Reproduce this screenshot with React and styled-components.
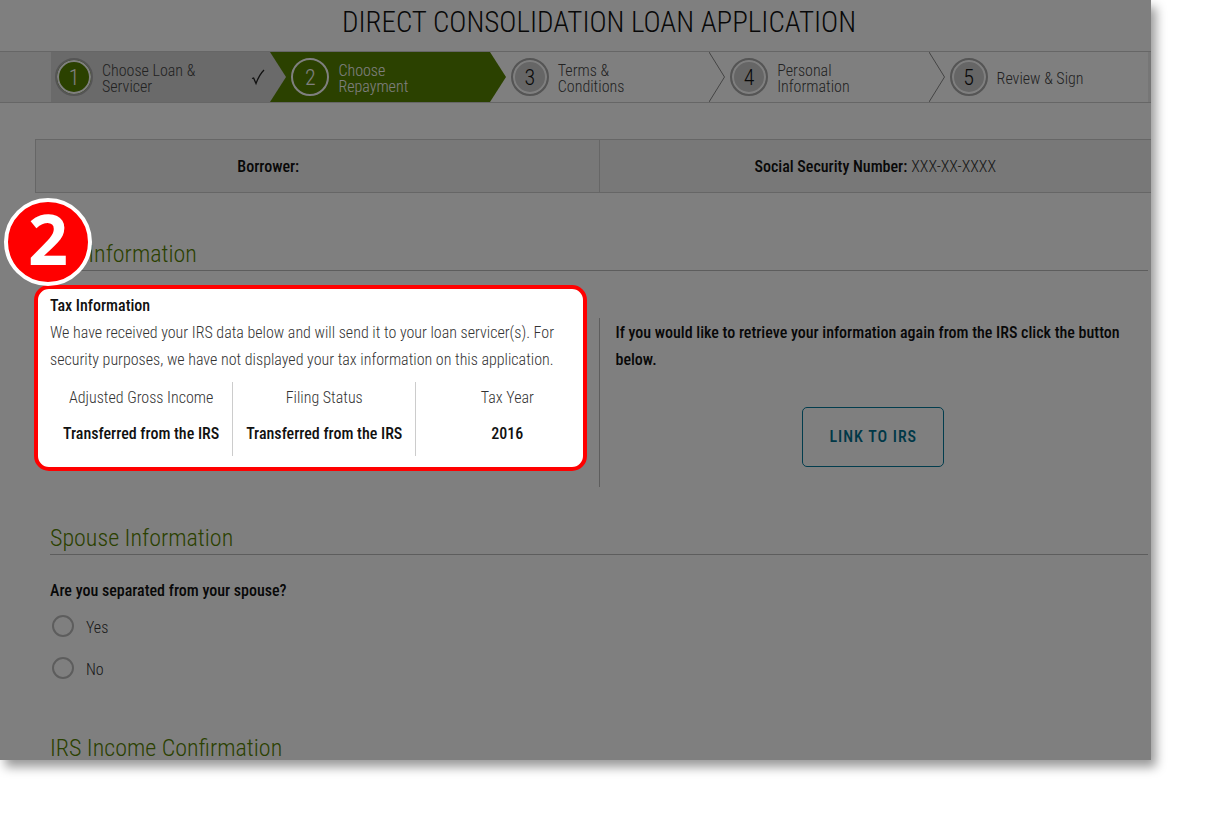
import React from 'react';
import styled, { createGlobalStyle } from 'styled-components';

const GlobalStyle = createGlobalStyle`
  *, *::before, *::after { box-sizing: border-box; }
  body {
    margin: 0;
    background: #fff;
    color: #333;
    font-family: "Roboto Condensed", "Liberation Sans Narrow", "Arial Narrow", "Liberation Sans", sans-serif;
    font-size: 16px;
    font-weight: 350;
    line-height: 27px;
  }
  h1, h2, h3, p { margin: 0; font-weight: inherit; }
`;

const Stage = styled.div`
  padding: 0 56px 58px 0;
`;

const Sheet = styled.main`
  position: relative;
  isolation: isolate;
  overflow: hidden;
  background: #fff;
  box-shadow: 5px 7px 10px rgba(0, 0, 0, 0.4);
`;

const Title = styled.h1`
  padding: 2px 0 9px 47px;
  color: #111;
  font-size: 29px;
  font-weight: 300;
  line-height: 40px;
  text-align: center;
`;

const StepBar = styled.nav`
  padding: 0 3px 0 51px;
  border: 1px solid #ccc;
  border-width: 1px 0;
  background: #ededed;
`;

const Steps = styled.ol`
  display: grid;
  grid-template-columns: repeat(5, 1fr);
  height: 50px;
  margin: 0;
  padding: 0;
  list-style: none;
  background: #fff;
`;

const fills = { done: '#d4d4d4', current: '#568200', todo: '#fff' };

const StepItem = styled.li`
  position: relative;
  display: flex;
  align-items: center;
  gap: 9px;
  padding: 0 5px 0 21px;
  background: ${({ $state }) => fills[$state]};
  color: ${({ $state }) => ($state === 'current' ? '#fff' : '#444')};
  line-height: 16px;
  &:first-child { padding-left: 4px; }
`;

const Arrow = styled.svg`
  position: absolute;
  z-index: 1;
  top: 0;
  left: 100%;
  width: 16px;
  height: 50px;
`;

const StepNumber = styled.span`
  flex: none;
  width: 38px;
  height: 38px;
  border: 2px solid ${({ $state }) => ($state === 'current' ? '#fff' : '#aaa')};
  border-radius: 50%;
  background: ${({ $state }) => ({ done: '#568200', current: 'transparent', todo: '#ccc' })[$state]};
  box-shadow: inset 0 0 0 2px ${({ $state }) => ($state === 'current' ? 'transparent' : '#fff')};
  color: ${({ $state }) => ($state === 'todo' ? '#111' : '#fff')};
  font-size: 22px;
  line-height: 36px;
  text-align: center;
`;

const StepLabel = styled.span`
  flex: 1;
  padding-top: 4px;
  white-space: pre-line;
`;

const Tick = styled.svg`
  width: 14px;
  height: 18px;
`;

const Identity = styled.dl`
  display: grid;
  grid-template-columns: calc(50% + 5px) 1fr;
  margin: 36px 0 0 35px;
  border: 1px solid #ccc;
  border-right: 0;
  background: #f0f0f0;
`;

const IdentityCell = styled.div`
  display: flex;
  justify-content: center;
  gap: 4px;
  padding: 13px 94px 12px 0;
  & + & {
    padding-right: 0;
    border-left: 1px solid #ccc;
  }
  dt { color: #111; font-weight: 500; }
  dd { margin: 0; }
`;

const SectionHeading = styled.h2`
  margin: ${({ $gap }) => $gap}px 3px 0 50px;
  border-bottom: 1px solid #bbb;
  color: #568200;
  font-size: 24px;
  font-weight: 300;
  line-height: 32px;
`;

const CutHeading = styled(SectionHeading)`
  border-bottom: 0;
  line-height: 24px;
`;

const Columns = styled.div`
  display: grid;
  grid-template-columns: 1fr 1fr;
  align-items: start;
  gap: 12px;
  margin: 14px 0 0 34px;
`;

const Spotlight = styled.section`
  position: relative;
  z-index: 2;
  padding: 3px 0 11px 12px;
  border: 4px solid #f00;
  border-radius: 15px;
  background: #fff;
  box-shadow: 0 0 0 3000px rgba(0, 0, 0, 0.5);
`;

const Callout = styled.span`
  position: absolute;
  top: -91px;
  left: -34px;
  width: 88px;
  height: 88px;
  border: 4px solid #fff;
  border-radius: 50%;
  background: #f00;
  color: #fff;
  font: 700 70px/72px "Open Sans", "Noto Sans", sans-serif;
  text-align: center;
`;

const Strong = styled.h3`
  color: #111;
  font-size: 16px;
  font-weight: 500;
`;

const Note = styled.p`
  padding-right: 8px;
`;

const TaxTable = styled.table`
  width: calc(100% + 16px);
  margin-top: 9px;
  border-collapse: collapse;
  table-layout: fixed;
  text-align: center;
  th, td { padding: 0; border-left: 1px solid #ccc; }
  th:first-child, td:first-child { border-left: 0; }
  th { height: 30px; font-weight: inherit; }
  td { height: 44px; padding-bottom: 2px; color: #111; font-weight: 500; }
`;

const Retrieve = styled.section`
  margin-top: 33px;
  padding: 1px 20px 20px 16px;
  border-left: 1px solid #bbb;
`;

const LinkButton = styled.button`
  display: block;
  margin: 34px auto 0;
  padding: 0 26px;
  border: 1px solid #047a9c;
  border-radius: 5px;
  background: #fff;
  color: #00708f;
  font: inherit;
  font-weight: 500;
  line-height: 58px;
  letter-spacing: 1px;
`;

const Question = styled.fieldset`
  margin: 22px 0 0 50px;
  padding: 0;
  border: 0;
  legend { padding: 0 0 2px; color: #111; font-weight: 500; }
`;

const Option = styled.label`
  display: flex;
  align-items: center;
  gap: 12px;
  height: 42px;
  input {
    appearance: none;
    width: 22px;
    height: 22px;
    margin: 0 0 2px 2px;
    border: 2px solid #bbb;
    border-radius: 50%;
  }
`;

const steps = [
  { label: 'Choose Loan &\nServicer', state: 'done' },
  { label: 'Choose\nRepayment', state: 'current' },
  { label: 'Terms &\nConditions', state: 'todo' },
  { label: 'Personal\nInformation', state: 'todo' },
  { label: 'Review & Sign', state: 'todo' },
];

function Step({ number, label, state, last }) {
  return (
    <StepItem $state={state} aria-current={state === 'current' ? 'step' : undefined}>
      <StepNumber $state={state}>{number}</StepNumber>
      <StepLabel>{label}</StepLabel>
      {state === 'done' && (
        <Tick viewBox="0 0 14 18" fill="none" stroke="#222" strokeWidth="1.3" aria-label="Completed">
          <path d="M1 10.5L2.6 10L5 15.5C7 10 9.5 5.500 13 2" />
        </Tick>
      )}
      {!last && (
        <Arrow viewBox="0 0 16 50" aria-hidden="true">
          <path d="M0 0L16 25L0 50Z" fill={fills[state]} />
          {state === 'todo' && <path d="M0 0L15.5 25L0 50" fill="none" stroke="#888" />}
        </Arrow>
      )}
    </StepItem>
  );
}

export default function App() {
  return (
    <Stage>
      <GlobalStyle />
      <Sheet>
        <Title>DIRECT CONSOLIDATION LOAN APPLICATION</Title>
        <StepBar aria-label="Application steps">
          <Steps>
            {steps.map((s, i) => (
              <Step key={s.label} number={i + 1} {...s} last={i === steps.length - 1} />
            ))}
          </Steps>
        </StepBar>
        <Identity>
          <IdentityCell><dt>Borrower:</dt><dd /></IdentityCell>
          <IdentityCell><dt>Social Security Number:</dt><dd>XXX-XX-XXXX</dd></IdentityCell>
        </Identity>
        <SectionHeading $gap={45}>Tax Information</SectionHeading>
        <Columns>
          <Spotlight>
            <Callout>2</Callout>
            <Strong>Tax Information</Strong>
            <Note>
              We have received your IRS data below and will send it to your loan servicer(s). For
              security purposes, we have not displayed your tax information on this application.
            </Note>
            <TaxTable>
              <thead>
                <tr><th>Adjusted Gross Income</th><th>Filing Status</th><th>Tax Year</th></tr>
              </thead>
              <tbody>
                <tr><td>Transferred from the IRS</td><td>Transferred from the IRS</td><td>2016</td></tr>
              </tbody>
            </TaxTable>
          </Spotlight>
          <Retrieve>
            <Strong>
              If you would like to retrieve your information again from the IRS click the button below.
            </Strong>
            <LinkButton type="button">LINK TO IRS</LinkButton>
          </Retrieve>
        </Columns>
        <SectionHeading $gap={35}>Spouse Information</SectionHeading>
        <Question>
          <legend>Are you separated from your spouse?</legend>
          <Option><input type="radio" name="separated" />Yes</Option>
          <Option><input type="radio" name="separated" />No</Option>
        </Question>
        <CutHeading $gap={46}>IRS Income Confirmation</CutHeading>
      </Sheet>
    </Stage>
  );
}
